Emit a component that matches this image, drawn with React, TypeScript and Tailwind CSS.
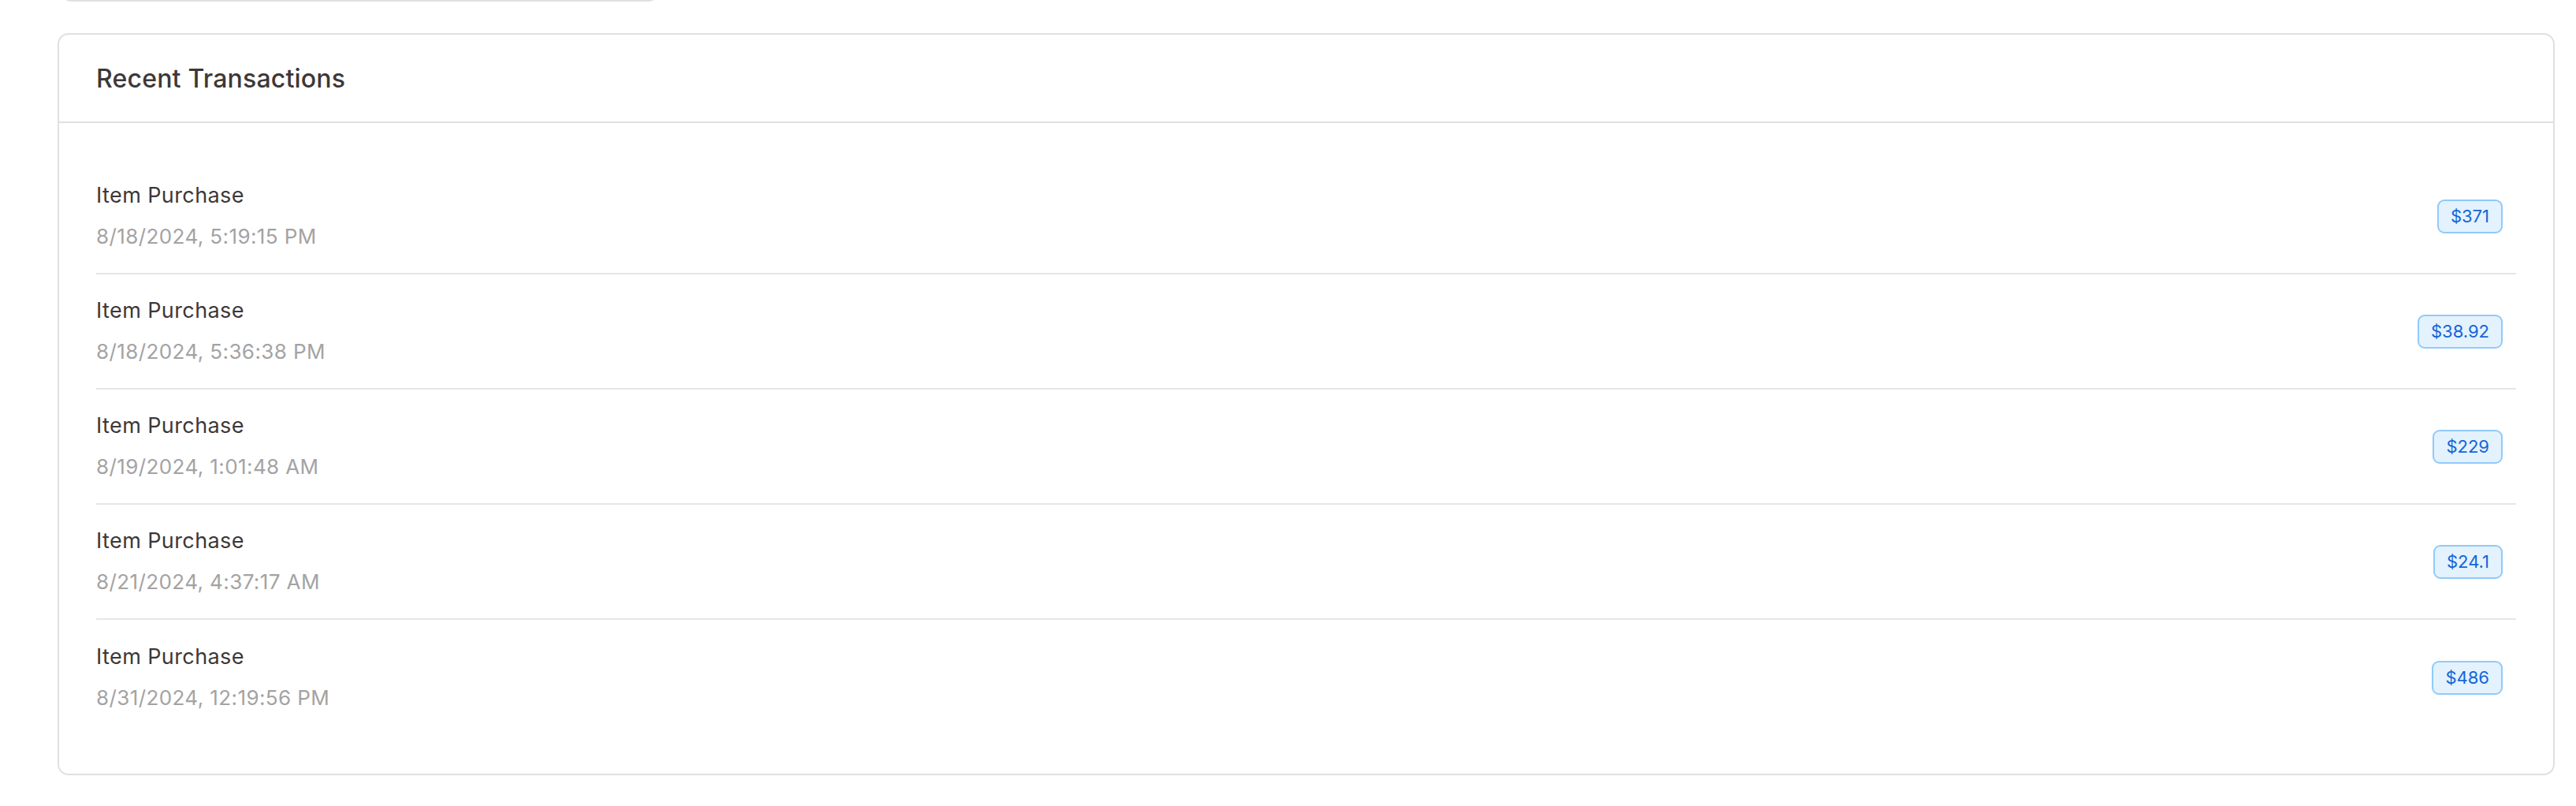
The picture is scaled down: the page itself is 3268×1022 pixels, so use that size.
const transactions = [
  { id: 1, label: "Item Purchase", date: "8/18/2024, 5:19:15 PM", amount: "$371" },
  { id: 2, label: "Item Purchase", date: "8/18/2024, 5:36:38 PM", amount: "$38.92" },
  { id: 3, label: "Item Purchase", date: "8/19/2024, 1:01:48 AM", amount: "$229" },
  { id: 4, label: "Item Purchase", date: "8/21/2024, 4:37:17 AM", amount: "$24.1" },
  { id: 5, label: "Item Purchase", date: "8/31/2024, 12:19:56 PM", amount: "$486" },
];

export default function App() {
  return (
    <div className="min-h-screen bg-white font-['Inter','Liberation_Sans',sans-serif]">
      {/* bottom edge of the control above, scrolled out of view */}
      <div className="ml-[78px] -mt-[40px] h-[42px] w-[757px] rounded-xl border-2 border-[#e0e0e0]" />

      <div className="ml-[73px] mr-[27px] mt-[40px] rounded-[14px] border-2 border-[#e0e0e0] bg-white">
        <div className="flex h-[112px] items-center border-b-2 border-[#e0e0e0] pl-[47px] pt-[2px]">
          <h2 className="text-[32px] font-medium tracking-[0.2px] text-[#3d3838]">Recent Transactions</h2>
        </div>

        <ul className="px-[47px] pt-[46px] pb-[49px]">
          {transactions.map((t, i) => (
            <li
              key={t.id}
              className={`flex h-[146px] items-center justify-between pr-[17px] ${
                i < transactions.length - 1 ? "border-b-2 border-[#e6e6e6]" : ""
              }`}
            >
              <div className="flex flex-col">
                <span className="text-[27px] leading-[38px] tracking-[0.4px] text-[#3d3838]">{t.label}</span>
                <span className="mt-[14px] text-[26px] leading-[38px] tracking-[0.4px] text-[#a3a3a3]">{t.date}</span>
              </div>
              <span className="flex h-[43px] items-center rounded-[9px] border-2 border-[#90caf9] bg-[#e3f2fd] px-[15px] text-[22px] text-[#1565d8]">
                {t.amount}
              </span>
            </li>
          ))}
        </ul>
      </div>
    </div>
  );
}
